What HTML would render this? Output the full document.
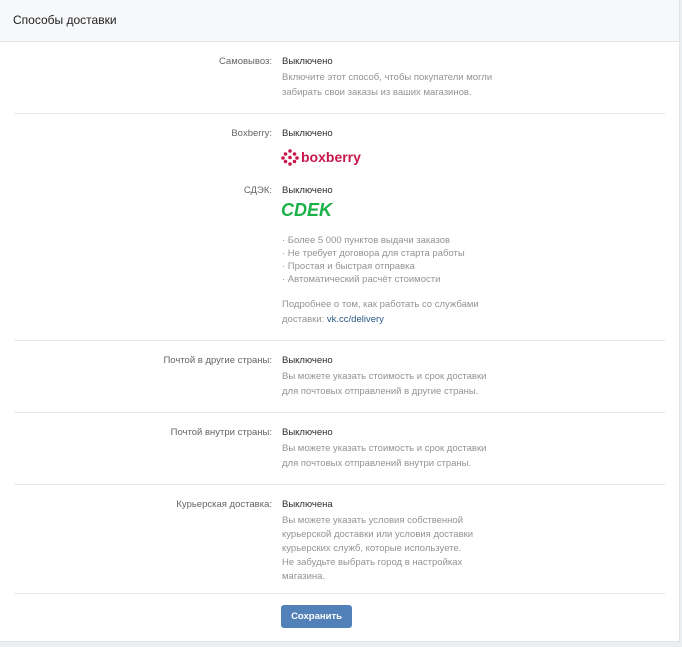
<!DOCTYPE html>
<html><head><meta charset="utf-8"><style>
*{margin:0;padding:0;box-sizing:border-box}
body{width:682px;height:647px;background:#edeef0;font-family:"Liberation Sans",Arial,sans-serif;font-size:9.5px;position:relative;overflow:hidden}
.card{position:absolute;left:0;top:0;width:680px;height:642px;background:#fff;border-right:1px solid #e1e3e6;border-bottom:1px solid #e1e3e6}
.hd{position:absolute;left:0;top:0;width:679px;height:42px;background:#f7f8fa;border-bottom:1px solid #e1e3e6}
.hd span{position:absolute;left:13px;top:13px;font-size:12px;color:#222}
.t{position:absolute;white-space:nowrap;line-height:14px}
.l{right:407px;color:#656565;text-align:right}
.v{left:282px;color:#2c2d2e}
.d{left:282px;color:#939393}
.sep{position:absolute;left:14px;width:651px;height:1px;background:#e7e8ec}
a{color:#2a5885;text-decoration:none}
.btn{position:absolute;left:281px;top:605px;width:71px;height:23px;background:#5181b8;border-radius:3px;color:#fff;font-weight:bold;font-size:9.5px;text-align:center;line-height:23px}
</style></head><body>
<div class="card">
<div class="hd"><span>Способы доставки</span></div>

<div class="t l" style="top:55px">Самовывоз:</div>
<div class="t v" style="top:55px">Выключено</div>
<div class="t d" style="top:71px">Включите этот способ, чтобы покупатели могли</div>
<div class="t d" style="top:86px">забирать свои заказы из ваших магазинов.</div>
<div class="sep" style="top:113px"></div>

<div class="t l" style="top:127px">Boxberry:</div>
<div class="t v" style="top:127px">Выключено</div>
<svg style="position:absolute;left:281px;top:149px" width="18" height="17" viewBox="0 0 18 17">
<g fill="#c8174b">
<circle cx="9" cy="2" r="1.8"/><circle cx="4.5" cy="5" r="1.8"/><circle cx="13.5" cy="5" r="1.8"/>
<circle cx="2" cy="9" r="1.8"/><circle cx="9" cy="8.5" r="1.8"/><circle cx="16" cy="9" r="1.8"/>
<circle cx="4.5" cy="12.5" r="1.8"/><circle cx="13.5" cy="12.5" r="1.8"/><circle cx="9" cy="15" r="1.8"/>
</g></svg>
<div class="t" style="left:301px;top:148px;font-size:14px;line-height:18px;color:#c8174b;font-weight:bold">boxberry</div>

<div class="t l" style="top:184px">СДЭК:</div>
<div class="t v" style="top:184px">Выключено</div>
<div class="t" style="left:281px;top:200px;font-size:18px;line-height:20px;color:#1ab248;font-weight:bold;font-style:italic;letter-spacing:0px">CDEK</div>

<div class="t d" style="top:234px">· Более 5 000 пунктов выдачи заказов</div>
<div class="t d" style="top:247px">· Не требует договора для старта работы</div>
<div class="t d" style="top:260px">· Простая и быстрая отправка</div>
<div class="t d" style="top:273px">· Автоматический расчёт стоимости</div>
<div class="t d" style="top:298px">Подробнее о том, как работать со службами</div>
<div class="t d" style="top:313px">доставки: <a>vk.cc/delivery</a></div>
<div class="sep" style="top:340px"></div>

<div class="t l" style="top:354px">Почтой в другие страны:</div>
<div class="t v" style="top:354px">Выключено</div>
<div class="t d" style="top:370px">Вы можете указать стоимость и срок доставки</div>
<div class="t d" style="top:385px">для почтовых отправлений в другие страны.</div>
<div class="sep" style="top:412px"></div>

<div class="t l" style="top:426px">Почтой внутри страны:</div>
<div class="t v" style="top:426px">Выключено</div>
<div class="t d" style="top:442px">Вы можете указать стоимость и срок доставки</div>
<div class="t d" style="top:457px">для почтовых отправлений внутри страны.</div>
<div class="sep" style="top:484px"></div>

<div class="t l" style="top:498px">Курьерская доставка:</div>
<div class="t v" style="top:498px">Выключена</div>
<div class="t d" style="top:514px">Вы можете указать условия собственной</div>
<div class="t d" style="top:528px">курьерской доставки или условия доставки</div>
<div class="t d" style="top:542px">курьерских служб, которые используете.</div>
<div class="t d" style="top:556px">Не забудьте выбрать город в настройках</div>
<div class="t d" style="top:570px">магазина.</div>
<div class="sep" style="top:593px"></div>

<div class="btn">Сохранить</div>
</div>
</body></html>
